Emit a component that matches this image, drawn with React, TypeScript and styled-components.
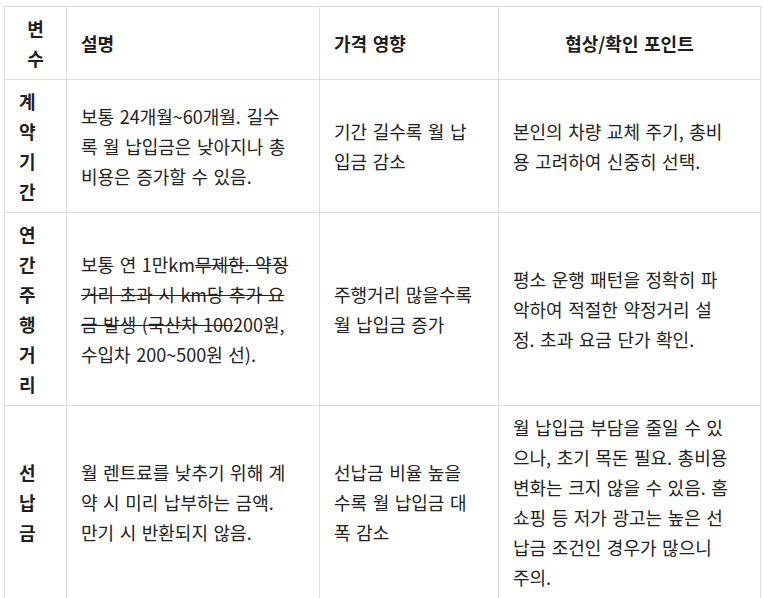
import React from "react";
import styled, { createGlobalStyle } from "styled-components";

const GlobalStyle = createGlobalStyle`
  html, body {
    margin: 0;
    padding: 0;
    background: #ffffff;
  }
  body {
    font-family: "Noto Sans CJK KR", "Noto Sans", sans-serif;
    color: #222222;
  }
`;

type Seg = { t: string; del?: boolean };
type Line = string | Seg[];

interface Row {
  name: string[];
  desc: Line[];
  impact: Line[];
  point: Line[];
}

const rows: Row[] = [
  {
    name: ["계", "약", "기", "간"],
    desc: ["보통 24개월~60개월. 길수", "록 월 납입금은 낮아지나 총", "비용은 증가할 수 있음."],
    impact: ["기간 길수록 월 납", "입금 감소"],
    point: ["본인의 차량 교체 주기, 총비", "용 고려하여 신중히 선택."],
  },
  {
    name: ["연", "간", "주", "행", "거", "리"],
    desc: [
      [{ t: "보통 연 1만km" }, { t: "무제한. 약정", del: true }],
      [{ t: "거리 초과 시 km당 추가 요", del: true }],
      [{ t: "금 발생 (국산차 100", del: true }, { t: "200원," }],
      "수입차 200~500원 선).",
    ],
    impact: ["주행거리 많을수록", "월 납입금 증가"],
    point: ["평소 운행 패턴을 정확히 파", "악하여 적절한 약정거리 설", "정. 초과 요금 단가 확인."],
  },
  {
    name: ["선", "납", "금"],
    desc: ["월 렌트료를 낮추기 위해 계", "약 시 미리 납부하는 금액.", "만기 시 반환되지 않음."],
    impact: ["선납금 비율 높을", "수록 월 납입금 대", "폭 감소"],
    point: [
      "월 납입금 부담을 줄일 수 있",
      "으나, 초기 목돈 필요. 총비용",
      "변화는 크지 않을 수 있음. 홈",
      "쇼핑 등 저가 광고는 높은 선",
      "납금 조건인 경우가 많으니",
      "주의.",
    ],
  },
];

const Page = styled.div`
  padding: 6px 3px 0 4px;
`;

const Table = styled.table`
  width: 756px;
  table-layout: fixed;
  border-collapse: collapse;
  font-size: 18px;
  line-height: 30px;
  word-spacing: 1.5px;
`;

const HeadCell = styled.th<{ $align: "left" | "center" }>`
  border: 1px solid #dcdcdc;
  padding: 6px 14px;
  text-align: ${(p) => p.$align};
  vertical-align: middle;
  font-weight: 700;
  color: #1e1e1e;
  white-space: nowrap;
`;

const NameCell = styled.td`
  border: 1px solid #dcdcdc;
  padding: 6px 14px;
  text-align: left;
  vertical-align: middle;
  font-weight: 700;
  color: #1e1e1e;
  white-space: nowrap;
`;

const BodyCell = styled.td`
  border: 1px solid #dcdcdc;
  padding: 6px 14px;
  text-align: left;
  vertical-align: middle;
  font-weight: 400;
  color: #222222;
  white-space: nowrap;
`;

const Struck = styled.del`
  text-decoration: line-through;
  text-decoration-thickness: 1px;
  color: inherit;
`;

function Lines({ lines }: { lines: Line[] }) {
  return (
    <>
      {lines.map((line, i) => (
        <React.Fragment key={i}>
          {i > 0 && <br />}
          {typeof line === "string"
            ? line
            : line.map((seg, j) =>
                seg.del ? <Struck key={j}>{seg.t}</Struck> : <React.Fragment key={j}>{seg.t}</React.Fragment>
              )}
        </React.Fragment>
      ))}
    </>
  );
}

export default function App() {
  return (
    <Page>
      <GlobalStyle />
      <Table>
        <colgroup>
          <col style={{ width: 62 }} />
          <col style={{ width: 253 }} />
          <col style={{ width: 179 }} />
          <col style={{ width: 262 }} />
        </colgroup>
        <thead>
          <tr>
            <HeadCell $align="center">
              <Lines lines={["변", "수"]} />
            </HeadCell>
            <HeadCell $align="left">설명</HeadCell>
            <HeadCell $align="left">가격 영향</HeadCell>
            <HeadCell $align="center">협상/확인 포인트</HeadCell>
          </tr>
        </thead>
        <tbody>
          {rows.map((r, i) => (
            <tr key={i}>
              <NameCell>
                <Lines lines={r.name} />
              </NameCell>
              <BodyCell>
                <Lines lines={r.desc} />
              </BodyCell>
              <BodyCell>
                <Lines lines={r.impact} />
              </BodyCell>
              <BodyCell>
                <Lines lines={r.point} />
              </BodyCell>
            </tr>
          ))}
        </tbody>
      </Table>
    </Page>
  );
}
